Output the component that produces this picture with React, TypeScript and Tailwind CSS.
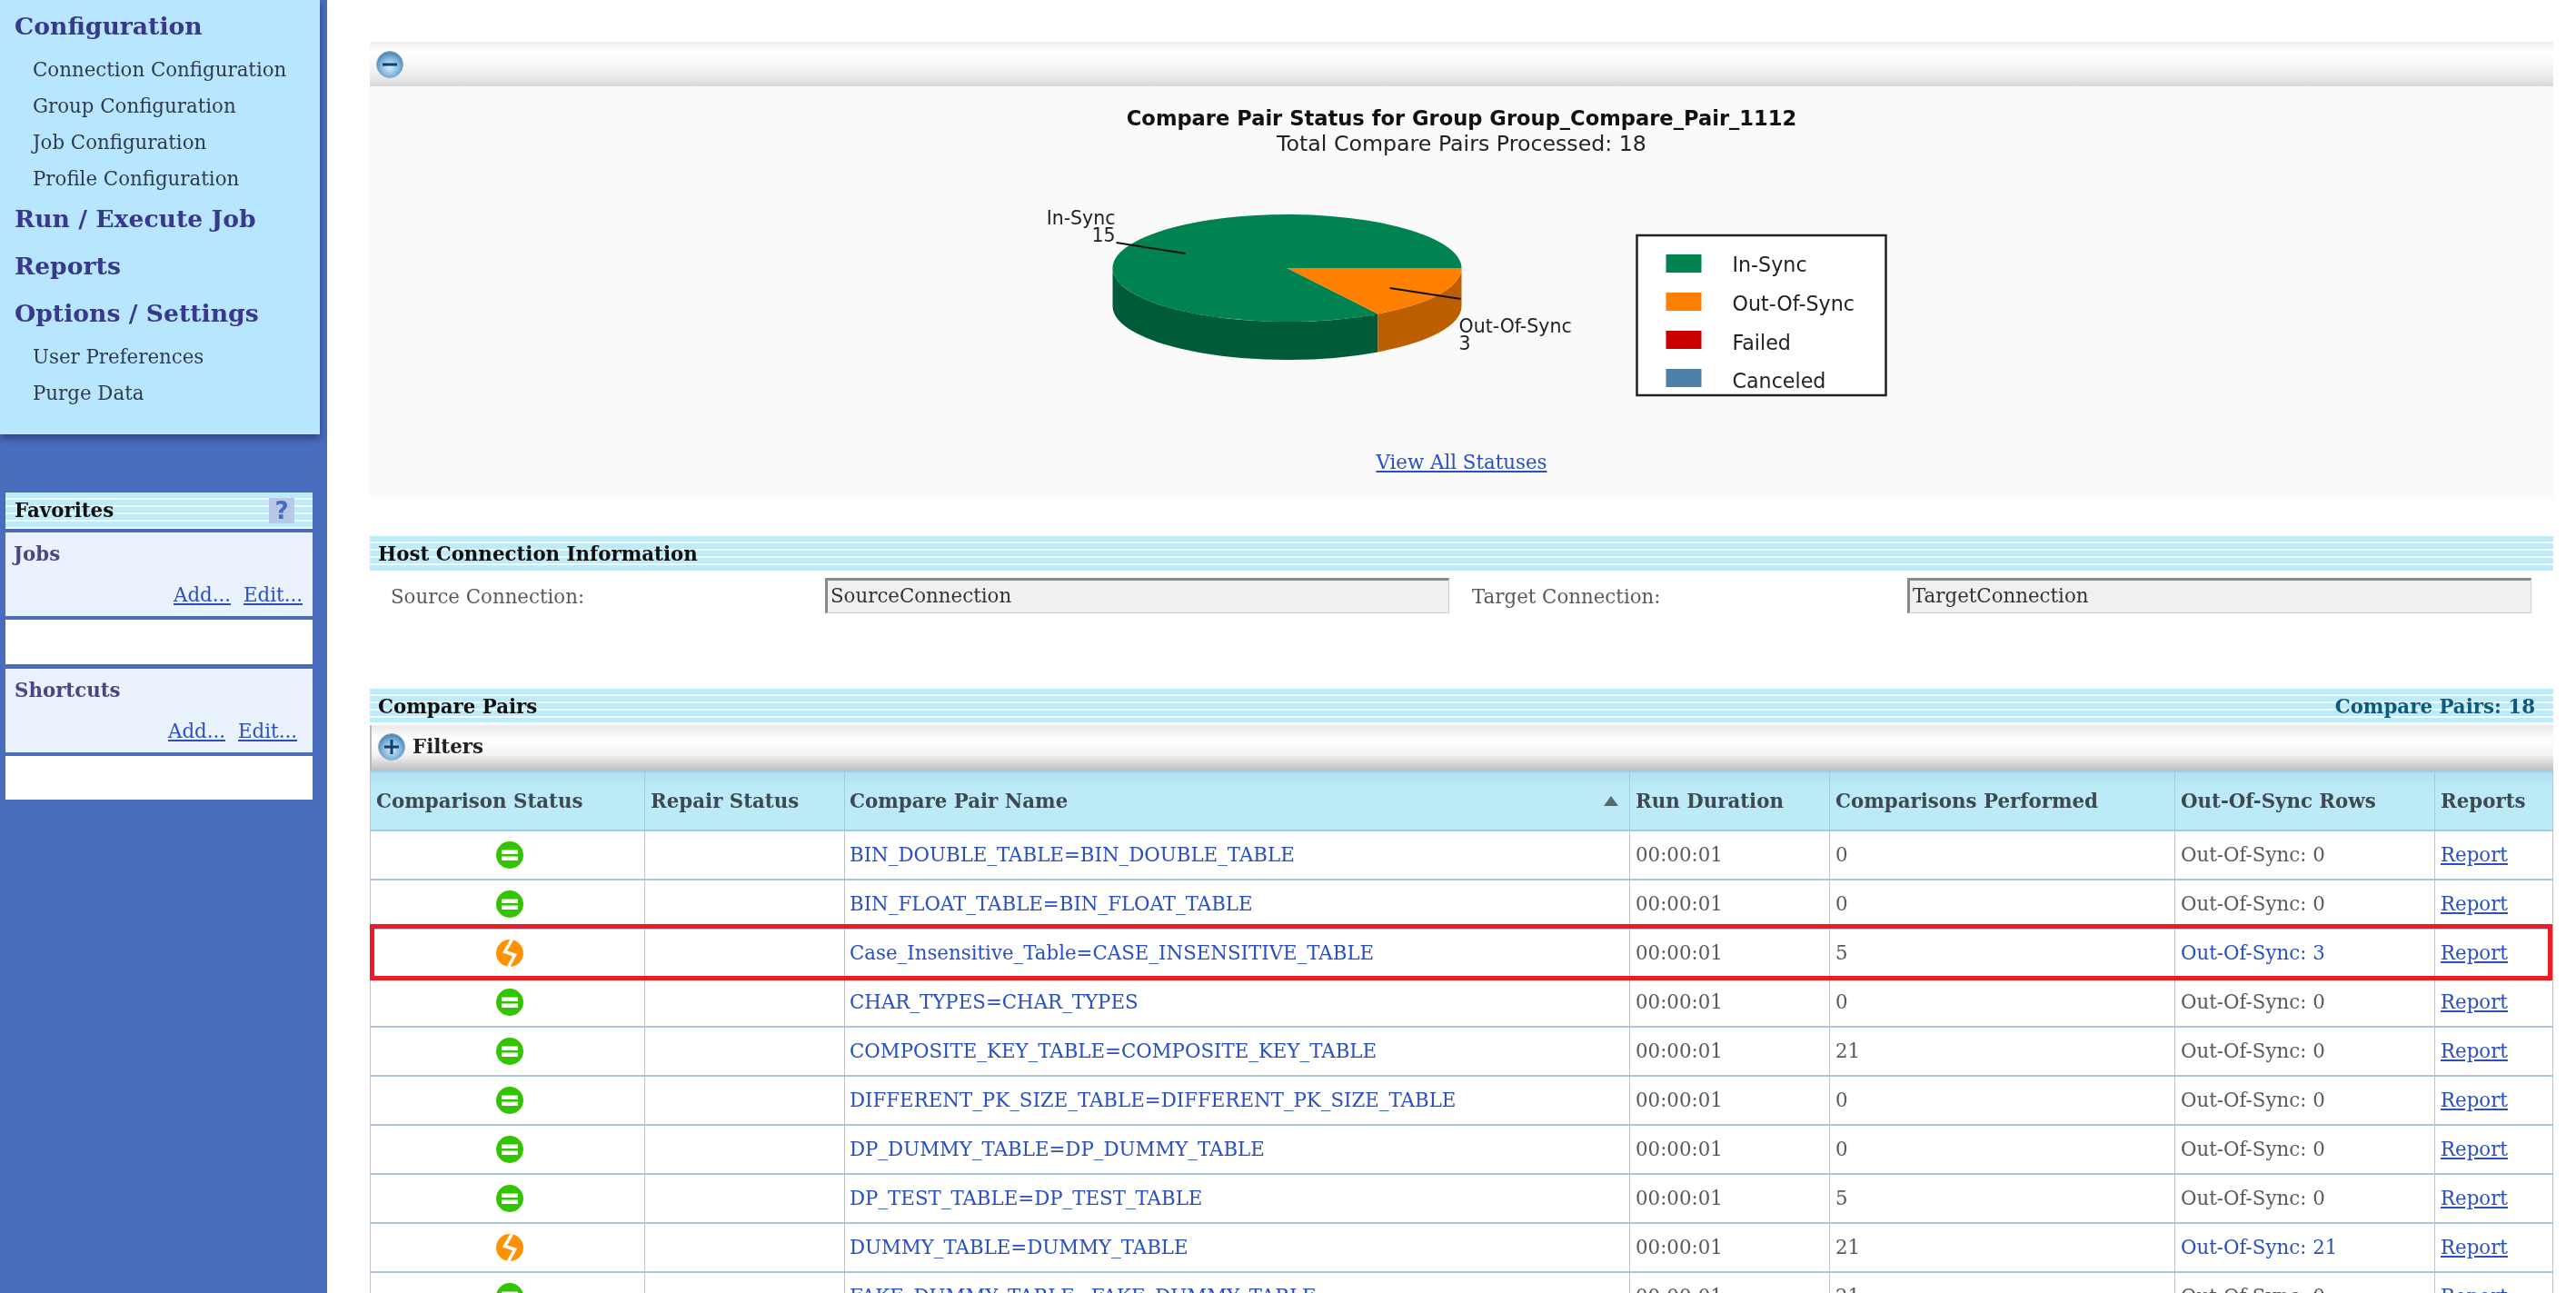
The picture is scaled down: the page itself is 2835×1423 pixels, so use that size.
import React from "react";

const serif = "font-['DejaVu_Serif',serif]";
const stripes =
  "bg-[repeating-linear-gradient(180deg,#bcebf9_0px,#bcebf9_6px,#f4fcff_6px,#f4fcff_8px)]";

function Equal() {
  return (
    <svg width="30" height="30" viewBox="0 0 30 30" className="mx-auto block">
      <circle cx="15" cy="15" r="15" fill="#33c400" />
      <rect x="6" y="9.5" width="18" height="4.5" fill="#fff" />
      <rect x="6" y="16.5" width="18" height="4.5" fill="#fff" />
    </svg>
  );
}

function Sync() {
  return (
    <svg width="30" height="30" viewBox="0 0 30 30" className="mx-auto block">
      <circle cx="15" cy="15" r="15" fill="#ff9200" />
      <polyline points="18,-1 9.5,13.5 20.5,17 13,31" fill="none" stroke="#fff" strokeWidth="3.5" />
    </svg>
  );
}

function Ball({ plus }: { plus?: boolean }) {
  const id = plus ? "ballp" : "ballm";
  return (
    <svg width="30" height="30" viewBox="0 0 30 30" className="block shrink-0">
      <defs>
        <radialGradient id={id} cx="50%" cy="60%" r="55%">
          <stop offset="0%" stopColor="#d8eefa" />
          <stop offset="65%" stopColor="#7fb4dc" />
          <stop offset="100%" stopColor="#4e86b4" />
        </radialGradient>
      </defs>
      <circle cx="15" cy="15" r="14.5" fill={`url(#${id})`} stroke="#8fb0c8" />
      <rect x="7" y="13.5" width="16" height="3" fill="#123e6a" />
      {plus && <rect x="13.5" y="7" width="3" height="16" fill="#123e6a" />}
    </svg>
  );
}

function Pie() {
  return (
    <svg
      width="1000"
      height="220"
      viewBox="1108.5 225 1000 220"
      className="block font-['DejaVu_Sans',sans-serif]"
    >
      <path d="M1224 295 L1224 337 A192 59 0 0 0 1516 387.4 L1516 345.4 A192 59 0 0 1 1224 295 Z" fill="#005c38" />
      <path d="M1516 345.4 L1516 387.4 A192 59 0 0 0 1608 337 L1608 295 A192 59 0 0 1 1516 345.4 Z" fill="#bd5f00" />
      <path d="M1416 295 L1516 345.4 A192 59 0 1 1 1608 295 Z" fill="#008251" />
      <path d="M1416 295 L1608 295 A192 59 0 0 1 1516 345.4 Z" fill="#ff8000" />
      <line x1="1228" y1="267" x2="1304" y2="279" stroke="#111" strokeWidth="2" />
      <line x1="1529" y1="317" x2="1607" y2="329" stroke="#111" strokeWidth="2" />
      <g className="text-[20.5px]" fill="#222">
        <text x="1227" y="247" textAnchor="end">In-Sync</text>
        <text x="1227" y="266" textAnchor="end">15</text>
        <text x="1605" y="366">Out-Of-Sync</text>
        <text x="1605" y="385">3</text>
      </g>
      <rect x="1801" y="259" width="274" height="176" fill="#fff" stroke="#222" strokeWidth="2.5" />
      <rect x="1833" y="280" width="39" height="20" fill="#008251" />
      <rect x="1833" y="322" width="39" height="20" fill="#ff8000" />
      <rect x="1833" y="364" width="39" height="20" fill="#c80000" />
      <rect x="1833" y="406" width="39" height="20" fill="#5080a8" />
      <g className="text-[22.2px]" fill="#222">
        <text x="1906" y="299">In-Sync</text>
        <text x="1906" y="341.5">Out-Of-Sync</text>
        <text x="1906" y="384.5">Failed</text>
        <text x="1906" y="426.5">Canceled</text>
      </g>
    </svg>
  );
}

const rows: [string, string, string, boolean][] = [
  ["BIN_DOUBLE_TABLE=BIN_DOUBLE_TABLE", "0", "0", false],
  ["BIN_FLOAT_TABLE=BIN_FLOAT_TABLE", "0", "0", false],
  ["Case_Insensitive_Table=CASE_INSENSITIVE_TABLE", "5", "3", true],
  ["CHAR_TYPES=CHAR_TYPES", "0", "0", false],
  ["COMPOSITE_KEY_TABLE=COMPOSITE_KEY_TABLE", "21", "0", false],
  ["DIFFERENT_PK_SIZE_TABLE=DIFFERENT_PK_SIZE_TABLE", "0", "0", false],
  ["DP_DUMMY_TABLE=DP_DUMMY_TABLE", "0", "0", false],
  ["DP_TEST_TABLE=DP_TEST_TABLE", "5", "0", false],
  ["DUMMY_TABLE=DUMMY_TABLE", "21", "21", true],
  ["FAKE_DUMMY_TABLE=FAKE_DUMMY_TABLE", "21", "0", false],
];

const th = "border-x border-y-2 border-[#a9c6e4] px-[6px] text-left font-bold text-[21.33px] text-[#3d4a52]";
const td = "border-x border-y-2 border-[#a9c6e4] px-[6px] text-[21.33px] text-[#5a5a5a]";
const link = "text-[#2a4fc0]";
const field =
  "w-[687px] h-[39px] bg-[#f0f0f0] border-t-[3px] border-l-[3px] border-b border-r border-t-[#8a8a8a] border-l-[#8a8a8a] border-b-[#cfcfcf] border-r-[#cfcfcf] pl-[3px] leading-[34px] text-[#333]";

function Sidebar() {
  const h = "px-[16px] font-bold text-[26.67px] leading-[34px] text-[#38388c]";
  const s = "pl-[36px] text-[21.33px] leading-[40px] text-[#2f3b4b]";
  return (
    <aside className="w-[360px] shrink-0 bg-[#4a6cbd]">
      <div className="w-[352px] h-[478px] bg-[#b8e6ff] pt-[12px] shadow-[0_4px_8px_rgba(20,30,80,0.55)]">
        <div className={h}>Configuration</div>
        <div className="mt-[11px]">
          <div className={s}>Connection Configuration</div>
          <div className={s}>Group Configuration</div>
          <div className={s}>Job Configuration</div>
          <div className={s}>Profile Configuration</div>
        </div>
        <div className={`${h} mt-[7px]`}>Run / Execute Job</div>
        <div className={`${h} mt-[18px]`}>Reports</div>
        <div className={`${h} mt-[18px]`}>Options / Settings</div>
        <div className="mt-[11px]">
          <div className={s}>User Preferences</div>
          <div className={s}>Purge Data</div>
        </div>
      </div>
      <div className="mt-[64px] ml-[6px] w-[338px]">
        <div className={`${stripes} h-[40px] flex items-center justify-between pl-[10px] pr-[20px]`}>
          <span className="font-bold text-[21.33px] text-[#111]">Favorites</span>
          <span className="w-[28px] h-[28px] bg-[#b8c8e6] text-[#4a6cbd] font-['DejaVu_Sans',sans-serif] font-bold text-[26px] leading-[28px] text-center">?</span>
        </div>
        <div className="mt-[4px] h-[92px] bg-[#eaf2fd] relative">
          <div className="pl-[9px] pt-[11px] font-bold text-[21.33px] leading-[26px] text-[#4a4585]">Jobs</div>
          <div className={`flex justify-end gap-[14px] pr-[11px] pt-[19px] text-[21.33px] leading-[26px] ${link} underline`}>
            <span>Add...</span>
            <span>Edit...</span>
          </div>
        </div>
        <div className="mt-[4px] h-[49px] bg-white" />
        <div className="mt-[5px] h-[92px] bg-[#eaf2fd]">
          <div className="pl-[10px] pt-[11px] font-bold text-[21.33px] leading-[26px] text-[#4a4585]">Shortcuts</div>
          <div className={`flex justify-end gap-[14px] pr-[17px] pt-[19px] text-[21.33px] leading-[26px] ${link} underline`}>
            <span>Add...</span>
            <span>Edit...</span>
          </div>
        </div>
        <div className="mt-[4px] h-[48px] bg-white" />
      </div>
    </aside>
  );
}

export default function App() {
  return (
    <div className={`flex h-[1423px] w-[2835px] overflow-hidden bg-white blur-[0.6px] ${serif}`}>
      <Sidebar />
      <main className="flex-1 pl-[47px] pr-[25px] pt-[46px] min-w-0">
        <section className="h-[502px] bg-[#fafafa]">
          <div className="h-[49px] flex items-center pl-[7px] bg-[linear-gradient(180deg,#efefef_0%,#ffffff_25%,#f0f0f0_70%,#d8d8d8_100%)]">
            <Ball />
          </div>
          <div className="flex flex-col items-center">
            <div className="mt-[21px] font-['DejaVu_Sans',sans-serif] font-bold text-[22.6px] leading-[28px] text-[#111]">
              Compare Pair Status for Group Group_Compare_Pair_1112
            </div>
            <div className="font-['DejaVu_Sans',sans-serif] text-[23.7px] leading-[28px] text-[#222]">
              Total Compare Pairs Processed: 18
            </div>
            <div className="mt-[53px]">
              <Pie />
            </div>
            <a className={`mt-[51px] text-[21.33px] leading-[26px] underline ${link}`}>View All Statuses</a>
          </div>
        </section>

        <section className="mt-[42px]">
          <div className={`${stripes} h-[38px] flex items-center pl-[9px] pt-[2px] font-bold text-[21.33px] text-[#111]`}>
            Host Connection Information
          </div>
          <div className="mt-[8px] flex items-center text-[21.33px] text-[#5a5a5a]">
            <span className="ml-[23px] w-[478px] pt-[2px]">Source Connection:</span>
            <div className={field}>SourceConnection</div>
            <span className="ml-[25px] w-[479px] pt-[2px]">Target Connection:</span>
            <div className={field}>TargetConnection</div>
          </div>
        </section>

        <section className="mt-[83px]">
          <div className={`${stripes} h-[37px] flex items-center justify-between pl-[9px] pr-[20px] pt-[2px] font-bold text-[21.33px] text-[#111]`}>
            <span>Compare Pairs</span>
            <span className="text-[#0d5a7a]">Compare Pairs: 18</span>
          </div>
          <div className="mt-[3px] h-[50px] flex items-center gap-[8px] pl-[7px] pb-[2px] font-bold text-[21.33px] text-[#222] border-l-2 border-l-[#bbbbbb] bg-[linear-gradient(180deg,#e8e8e8_0%,#ffffff_30%,#f4f4f4_65%,#bdbdbd_100%)]">
            <Ball plus />
            <span>Filters</span>
          </div>
          <div className="relative">
            <table className="table-fixed border-collapse w-[2402px]">
              <colgroup>
                <col className="w-[302px]" />
                <col className="w-[220px]" />
                <col className="w-[864px]" />
                <col className="w-[220px]" />
                <col className="w-[380px]" />
                <col className="w-[286px]" />
                <col className="w-[130px]" />
              </colgroup>
              <thead>
                <tr className="h-[65px] bg-[linear-gradient(180deg,#b0e0f2_0%,#bdeaf7_30%,#bdeaf7_100%)]">
                  <th className={th}>Comparison Status</th>
                  <th className={th}>Repair Status</th>
                  <th className={`${th} !pl-[5px]`}>
                    <div className="flex items-center justify-between pr-[6px]">
                      <span>Compare Pair Name</span>
                      <svg width="16" height="11" viewBox="0 0 16 11">
                        <path d="M8 0 L16 11 L0 11 Z" fill="#5a6a70" />
                      </svg>
                    </div>
                  </th>
                  <th className={th}>Run Duration</th>
                  <th className={th}>Comparisons Performed</th>
                  <th className={th}>Out-Of-Sync Rows</th>
                  <th className={th}>Reports</th>
                </tr>
              </thead>
              <tbody>
                {rows.map(([name, comps, oos, bad]) => (
                  <tr key={name} className="h-[54px]">
                    <td className={`${td} !pl-[10px]`}>{bad ? <Sync /> : <Equal />}</td>
                    <td className={td} />
                    <td className={`${td} !pl-[5px] !text-[#2a4fc0]`}>{name}</td>
                    <td className={td}>00:00:01</td>
                    <td className={td}>{comps}</td>
                    <td className={`${td} ${bad ? "!text-[#2a4fc0]" : ""}`}>Out-Of-Sync: {oos}</td>
                    <td className={`${td} !text-[#2a4fc0] underline`}>Report</td>
                  </tr>
                ))}
              </tbody>
            </table>
            <div className="absolute left-0 top-[169px] w-[2402px] h-[62px] border-[5px] border-[#ee1c25] pointer-events-none" />
          </div>
        </section>
      </main>
    </div>
  );
}
